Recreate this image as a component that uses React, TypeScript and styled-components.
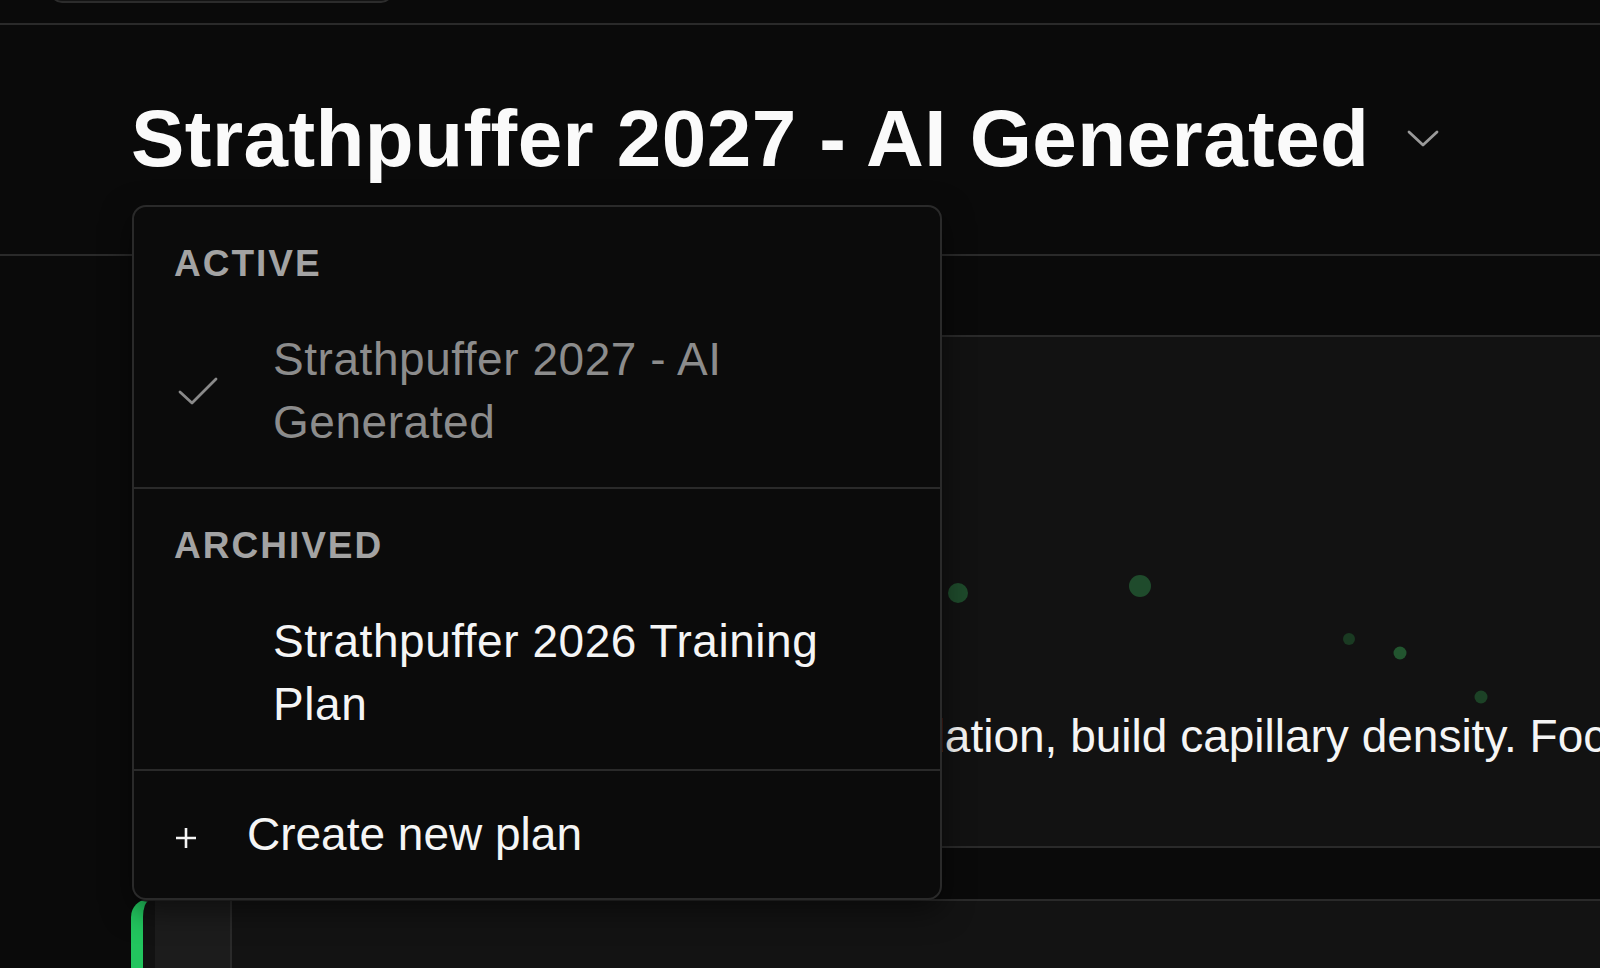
import React from 'react';
import styled, {createGlobalStyle} from 'styled-components';

const GlobalStyle = createGlobalStyle`
  html, body {
    margin: 0;
    padding: 0;
    background: #0a0a0a;
    overflow: hidden;
  }
  body {
    font-family: "Liberation Sans", Arial, sans-serif;
    color: #f5f5f5;
  }
`;

type Dot = { x: number; y: number; r: number; color: string };

const dots: Dot[] = [
    {x: 822, y: 256, r: 10, color: '#1e4a2b'},
    {x: 1004, y: 249, r: 11, color: '#1f4b2c'},
    {x: 1213, y: 302, r: 6, color: '#1a3a22'},
    {x: 1264, y: 316, r: 6.5, color: '#22552f'},
    {x: 1345, y: 360, r: 6.5, color: '#1c4226'},
];

type Plan = { id: string; name: string };

const activePlan: Plan = {id: 'p27', name: 'Strathpuffer 2027 - AI Generated'};
const archivedPlans: Plan[] = [{id: 'p26', name: 'Strathpuffer 2026 Training Plan'}];

const App = () => {
    return (
        <Page>
            <GlobalStyle/>
            <TopBar>
                <Pill/>
            </TopBar>

            <TitleHeader>
                <TitleWrap>
                    <TitleButton>
                        <Title>{activePlan.name}</Title>
                        <svg width="32" height="18" viewBox="0 0 32 18" fill="none">
                            <path d="M2 2 L16 15 L30 2" stroke="#9a9a9a" strokeWidth="2.8"
                                  strokeLinecap="round" strokeLinejoin="round"/>
                        </svg>
                    </TitleButton>

                    <Menu>
                        <Section>
                            <SectionLabel>Active</SectionLabel>
                            <Item>
                                <CheckSlot>
                                    <svg width="42" height="30" viewBox="0 0 42 30" fill="none">
                                        <path d="M3 16 L15 27 L39 3" stroke="#8a8a8a" strokeWidth="2.8"
                                              strokeLinecap="round" strokeLinejoin="round"/>
                                    </svg>
                                </CheckSlot>
                                <ItemText muted>{activePlan.name}</ItemText>
                            </Item>
                        </Section>
                        <Section>
                            <SectionLabel>Archived</SectionLabel>
                            {archivedPlans.map(p => (
                                <Item key={p.id}>
                                    <CheckSlot/>
                                    <ItemText>{p.name}</ItemText>
                                </Item>
                            ))}
                        </Section>
                        <CreateRow>
                            <PlusSlot>
                                <svg width="24" height="24" viewBox="0 0 24 24" fill="none">
                                    <path d="M12 2 V22 M2 12 H22" stroke="#f5f5f5" strokeWidth="2.6"/>
                                </svg>
                            </PlusSlot>
                            <CreateText>Create new plan</CreateText>
                        </CreateRow>
                    </Menu>
                </TitleWrap>
            </TitleHeader>

            <Main>
                <PhaseCard>
                    <DotLayer width="2000" height="520">
                        {dots.map((d, i) => (
                            <circle key={i} cx={d.x} cy={d.y} r={d.r} fill={d.color}/>
                        ))}
                    </DotLayer>
                    <PhaseText>
                        Aerobic foundation: improve fat oxidation, build capillary density. Focus on long steady rides.
                    </PhaseText>
                </PhaseCard>

                <WeekRow>
                    <WeekCell/>
                    <WeekBody/>
                </WeekRow>
            </Main>
        </Page>
    );
};

export default App;

const Page = styled.div`
  width: 1600px;
  height: 968px;
  overflow: hidden;
  background: #0a0a0a;
`;

const TopBar = styled.div`
  height: 23px;
  display: flex;
  align-items: flex-end;
  padding-left: 50px;
  border-bottom: 2px solid #2a2a2a;
  overflow: hidden;
`;

const Pill = styled.div`
  width: 343px;
  height: 60px;
  margin-bottom: 20px;
  flex-shrink: 0;
  box-sizing: border-box;
  background: #141414;
  border: 2px solid #2c2c2c;
  border-radius: 12px;
`;

const TitleHeader = styled.div`
  padding: 66px 0 67px 131px;
  border-bottom: 2px solid #2a2a2a;
`;

const TitleWrap = styled.div`
  position: relative;
  display: inline-block;
`;

const TitleButton = styled.div`
  display: flex;
  align-items: center;
  gap: 38px;
  cursor: pointer;
`;

const Title = styled.h1`
  margin: 0;
  font-size: 80px;
  line-height: 96px;
  font-weight: 700;
  letter-spacing: 0.45px;
  color: #fafafa;
  white-space: nowrap;
`;

const Menu = styled.div`
  position: absolute;
  top: calc(100% + 18px);
  left: 1px;
  z-index: 10;
  width: 810px;
  box-sizing: border-box;
  background: #0b0b0b;
  border: 2px solid #2a2a2a;
  border-radius: 14px;
  box-shadow: 0 10px 30px rgba(0, 0, 0, 0.5);
`;

const Section = styled.div`
  padding: 35px 40px 33px;
  border-bottom: 2px solid #2a2a2a;
`;

const SectionLabel = styled.div`
  font-size: 37px;
  line-height: 44px;
  font-weight: 700;
  letter-spacing: 2px;
  text-transform: uppercase;
  color: #a3a3a3;
`;

const Item = styled.div`
  display: flex;
  align-items: center;
  margin-top: 42px;
`;

const CheckSlot = styled.div`
  width: 99px;
  flex-shrink: 0;
  display: flex;
  align-items: center;
  padding-left: 3px;
  box-sizing: border-box;
`;

const ItemText = styled.div<{ muted?: boolean }>`
  width: 600px;
  font-size: 46px;
  line-height: 63px;
  letter-spacing: 0.55px;
  color: ${props => props.muted ? '#8c8c8c' : '#f5f5f5'};
`;

const CreateRow = styled.div`
  display: flex;
  align-items: center;
  padding: 32px 40px;
`;

const PlusSlot = styled.div`
  width: 73px;
  flex-shrink: 0;
  display: flex;
  align-items: center;
  margin-top: 7px;
`;

const CreateText = styled.div`
  font-size: 46px;
  line-height: 63px;
  color: #f5f5f5;
  white-space: nowrap;
`;

const Main = styled.div`
  padding: 79px 0 0 131px;
  display: flex;
  flex-direction: column;
  gap: 51px;
`;

const PhaseCard = styled.div`
  position: relative;
  width: 2000px;
  height: 513px;
  margin-left: 3px;
  box-sizing: border-box;
  display: flex;
  flex-direction: column;
  justify-content: flex-end;
  padding: 0 0 78px 75px;
  background: #121212;
  border: 2px solid #2a2a2a;
  border-radius: 16px;
  overflow: hidden;
`;

const DotLayer = styled.svg`
  position: absolute;
  top: 0;
  left: 0;
  pointer-events: none;
`;

const PhaseText = styled.div`
  position: relative;
  font-size: 46px;
  line-height: 63px;
  color: #f5f5f5;
  white-space: nowrap;
`;

const WeekRow = styled.div`
  width: 2000px;
  height: 300px;
  display: flex;
  padding-left: 12px;
  box-sizing: border-box;
  background: #121212;
  border-top: 2px solid #2a2a2a;
  border-left: 12px solid #22c55e;
  border-top-left-radius: 18px;
`;

const WeekCell = styled.div`
  width: 75px;
  flex-shrink: 0;
  background: #1c1c1c;
  border-right: 2px solid #2a2a2a;
`;

const WeekBody = styled.div`
  flex: 1;
  background: #131313;
`;
